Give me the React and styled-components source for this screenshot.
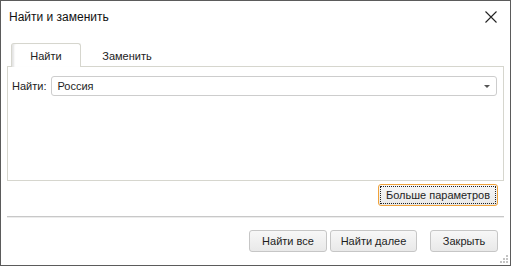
import React from "react";
import styled, { createGlobalStyle } from "styled-components";

const Global = createGlobalStyle`
  html, body { margin: 0; padding: 0; background: #fff; }
  * { box-sizing: border-box; }
`;

const Window = styled.div`
  position: relative;
  width: 511px;
  height: 266px;
  border: 1px solid #5b5b5b;
  background: #fff;
  display: flex;
  flex-direction: column;
  font-family: "Liberation Sans", Arial, sans-serif;
  font-size: 11px;
  color: #1e1e1e;
`;

const TitleBar = styled.div`
  height: 31px;
  display: flex;
  align-items: center;
  justify-content: space-between;
  padding: 0 12px 0 8px;
`;

const Title = styled.span`
  font-size: 12px;
  color: #111;
`;

const CloseButton = styled.button`
  border: none;
  background: none;
  padding: 0;
  width: 14px;
  height: 14px;
  display: flex;
  align-items: center;
  justify-content: center;
`;

const Body = styled.div`
  padding: 10px 6px 0 6px;
  display: flex;
  flex-direction: column;
`;

const TabStrip = styled.div`
  display: flex;
  align-items: flex-end;
  padding-left: 4px;
  height: 24px;
`;

const Tab = styled.div`
  width: ${(p) => (p.$active ? "70px" : "92px")};
  height: ${(p) => (p.$active ? "24px" : "22px")};
  display: flex;
  align-items: center;
  justify-content: center;
  background: ${(p) => (p.$active ? "#fff" : "transparent")};
  border: 1px solid ${(p) => (p.$active ? "#d6d6ce" : "transparent")};
  border-bottom: none;
  border-radius: 3px 3px 0 0;
  box-shadow: ${(p) => (p.$active ? "inset 3px 0 2px -1px #e4e4e4" : "none")};
  margin-bottom: ${(p) => (p.$active ? "-1px" : "0")};
  position: relative;
  z-index: 1;
  color: #222;
`;

const Panel = styled.div`
  height: 115px;
  border: 1px solid #d6d6ce;
  padding: 9px 6px 0 4px;
`;

const FieldRow = styled.div`
  display: flex;
  align-items: center;
  gap: 5px;
`;

const Label = styled.span`
  color: #222;
`;

const Combo = styled.div`
  flex: 1;
  height: 20px;
  border: 1px solid #cdcdcd;
  border-radius: 3px;
  display: flex;
  align-items: center;
  justify-content: space-between;
  padding: 0 6px 0 5px;
  color: #1e1e1e;
`;

const Arrow = styled.span`
  width: 0;
  height: 0;
  border-left: 3px solid transparent;
  border-right: 3px solid transparent;
  border-top: 3px solid #555;
`;

const MoreRow = styled.div`
  display: flex;
  justify-content: flex-end;
  padding: 3px 6px 0 0;
`;

const Button = styled.button`
  font-family: "Liberation Sans", Arial, sans-serif;
  font-size: 11px;
  color: #1e1e1e;
  height: 22px;
  width: ${(p) => p.$w};
  border: 1px solid ${(p) => (p.$focused ? "#f0a23a" : "#c6c6c6")};
  border-radius: 3px;
  background: linear-gradient(#f7f7f7, #e9e9e9);
  padding: 0;
  position: relative;
  display: flex;
  align-items: center;
  justify-content: center;
  ${(p) =>
    p.$focused &&
    `&::after {
      content: "";
      position: absolute;
      inset: 1px;
      border: 1px dotted #222;
    }`}
`;

const Separator = styled.div`
  margin-top: 10px;
  height: 2px;
  border-top: 1px solid #c8c8c8;
  border-bottom: 1px solid #ececec;
`;

const Footer = styled.div`
  display: flex;
  justify-content: flex-end;
  gap: 3px;
  padding: 12px 6px 0 0;
`;

const Spacer = styled.div`
  width: 7px;
`;

const Grip = styled.svg`
  position: absolute;
  right: 1px;
  bottom: 1px;
`;

export default function App() {
  const dots = [
    [8, 2],
    [5, 5], [8, 5],
    [2, 8], [5, 8], [8, 8],
  ];
  return (
    <>
      <Global />
      <Window>
        <TitleBar>
          <Title>Найти и заменить</Title>
          <CloseButton aria-label="close">
            <svg width="12" height="12" viewBox="0 0 12 12">
              <path d="M0.5 0.5 L11.5 11.5 M11.5 0.5 L0.5 11.5" stroke="#222" strokeWidth="1.1" fill="none" />
            </svg>
          </CloseButton>
        </TitleBar>
        <Body>
          <TabStrip>
            <Tab $active>Найти</Tab>
            <Tab>Заменить</Tab>
          </TabStrip>
          <Panel>
            <FieldRow>
              <Label>Найти:</Label>
              <Combo>
                <span>Россия</span>
                <Arrow />
              </Combo>
            </FieldRow>
          </Panel>
          <MoreRow>
            <Button $focused $w="120px">Больше параметров</Button>
          </MoreRow>
          <Separator />
          <Footer>
            <Button $w="78px">Найти все</Button>
            <Button $w="87px">Найти далее</Button>
            <Spacer />
            <Button $w="68px">Закрыть</Button>
          </Footer>
        </Body>
        <Grip width="10" height="10" viewBox="0 0 10 10">
          {dots.map(([x, y]) => (
            <rect key={`${x}-${y}`} x={x - 1} y={y - 1} width="2" height="2" fill="#c4c4c4" />
          ))}
        </Grip>
      </Window>
    </>
  );
}
